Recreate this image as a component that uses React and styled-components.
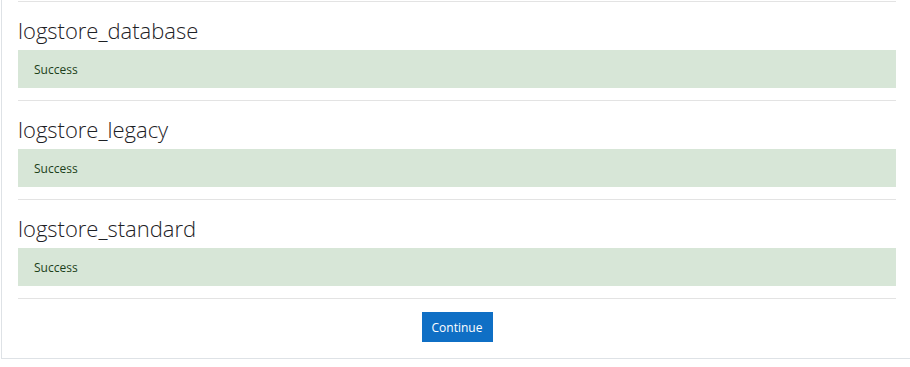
import React from 'react';
import styled, { createGlobalStyle } from 'styled-components';

const GlobalStyle = createGlobalStyle`
  body {
    margin: 0;
    background: #fff;
    font-family: 'Open Sans', 'Liberation Sans', sans-serif;
    color: #1d2125;
  }
`;

const Panel = styled.div`
  margin-left: 1px;
  width: 912px;
  box-sizing: border-box;
  border: 1px solid #dee2e6;
  border-top: none;
  padding: 1px 16px 16px;
`;

const Rule = styled.hr`
  margin: 0;
  border: 0;
  border-top: 1px solid #e3e3e3;
  height: 0;
`;

const Section = styled.section`
  padding-bottom: 12px;
`;

const PluginName = styled.h3`
  margin: 0;
  padding: 14px 0 6px;
  font-size: 22px;
  font-weight: 300;
  line-height: 28px;
  color: #1d2125;
`;

const Notice = styled.div`
  height: 38px;
  box-sizing: border-box;
  padding: 0 16px;
  display: flex;
  align-items: center;
  background: #d7e6d7;
  color: #1c3f1a;
  font-size: 12px;
`;

const Footer = styled.div`
  display: flex;
  justify-content: center;
  padding-top: 13px;
`;

const Button = styled.button`
  height: 30px;
  width: 71px;
  padding: 0;
  border: 0;
  background: #0f6fc5;
  color: #fff;
  font-family: 'Open Sans', 'Liberation Sans', sans-serif;
  font-size: 12px;
  cursor: pointer;
`;

const plugins = ['logstore_database', 'logstore_legacy', 'logstore_standard'];

export default function App() {
  return (
    <>
      <GlobalStyle />
      <Panel>
        {plugins.map((name) => (
          <React.Fragment key={name}>
            <Rule />
            <Section>
              <PluginName>{name}</PluginName>
              <Notice>Success</Notice>
            </Section>
          </React.Fragment>
        ))}
        <Rule />
        <Footer>
          <Button>Continue</Button>
        </Footer>
      </Panel>
    </>
  );
}
